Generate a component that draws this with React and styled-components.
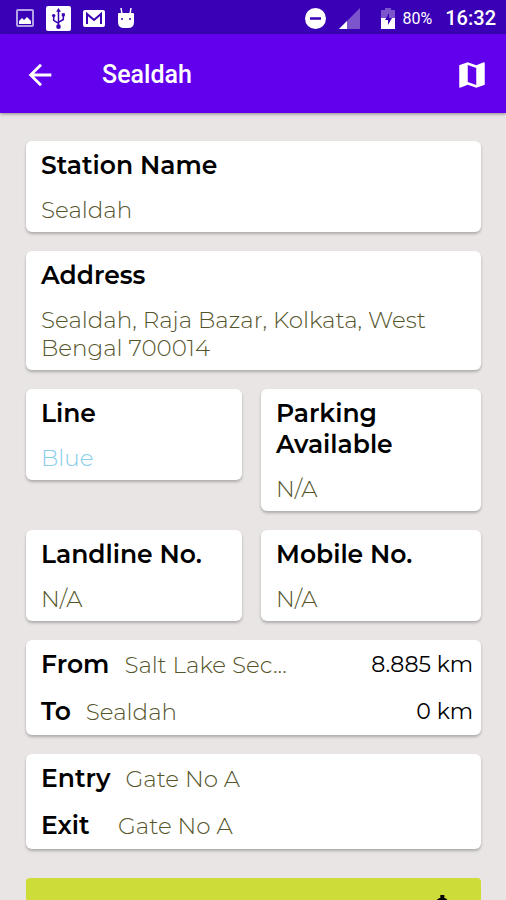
import React from 'react';
import styled, { createGlobalStyle } from 'styled-components';
import { MdArrowBack, MdMap, MdAttachMoney } from 'react-icons/md';

const details = {
    name: 'Sealdah',
    address: 'Sealdah, Raja Bazar, Kolkata, West Bengal 700014',
    line: 'Blue',
    parking: 'N/A',
    landline: 'N/A',
    mobile: 'N/A',
};

const distances = [
    { label: 'From', station: 'Salt Lake Sec...', distance: '8.885 km' },
    { label: 'To', station: 'Sealdah', distance: '0 km' },
];

const gates = [
    { label: 'Entry', gate: 'Gate No A' },
    { label: 'Exit', gate: 'Gate No A' },
];

const InfoCard = ({ title, value, color }) => (
    <Card>
        <CardTitle>{title}</CardTitle>
        <CardValue $color={color}>{value}</CardValue>
    </Card>
);

const StatusIcons = () => (
    <IconGroup>
        <svg width="18" height="18" viewBox="0 0 18 18">
            <rect x="1" y="1" width="16" height="16" rx="1" fill="none" stroke="#b3a2e6" strokeWidth="2" />
            <path d="M3 15V12l3-3 2 2 3-3 4 4v3z" fill="#fff" />
        </svg>
        <svg width="25" height="25" viewBox="0 0 26 26">
            <rect width="26" height="26" rx="2" fill="#fff" />
            <path d="M13 5v17M13 18l-5-3v-5M13 17l5-3V9" fill="none" stroke="#3a00b5" strokeWidth="1.6" />
            <g fill="#3a00b5">
                <path d="M13 2l2.5 4h-5z" />
                <circle cx="13" cy="21.5" r="2.4" />
                <circle cx="8" cy="10" r="1.8" />
                <path d="M16.4 7.5h3.2v3.2h-3.2z" />
            </g>
        </svg>
        <svg width="22" height="18" viewBox="0 0 22 18">
            <rect width="22" height="17" y="1" rx="2" fill="#fff" />
            <path d="M4 15V5l7 6 7-6v10" fill="none" stroke="#3a00b5" strokeWidth="2" />
        </svg>
        <svg width="18" height="20" viewBox="0 0 18 20">
            <path d="M4 0l1 6M14 0l-1 6" stroke="#fff" strokeWidth="1.5" />
            <path d="M2 5h14q1 0 1 1v8q0 6-6 6H7q-6 0-6-6V6q0-1 1-1z" fill="#fff" />
            <circle cx="5" cy="11" r="1" fill="#3a00b5" />
            <circle cx="13" cy="11" r="1" fill="#3a00b5" />
        </svg>
    </IconGroup>
);

const App = () => {
    return (
        <Screen>
            <GlobalStyle />
            <StatusBar>
                <StatusIcons />
                <StatusRight>
                    <svg width="21" height="21" viewBox="0 0 21 21">
                        <circle cx="10.5" cy="10.5" r="10.5" fill="#fff" />
                        <path d="M5 10.5h11" stroke="#3a00b5" strokeWidth="2.5" />
                    </svg>
                    <svg width="21" height="21" viewBox="0 0 21 21">
                        <path d="M21 0v21H0z" fill="#7c55cd" />
                        <path d="M8 13v8H0z" fill="#fff" />
                    </svg>
                    <Battery>
                        <svg width="14" height="21" viewBox="0 0 14 21">
                            <path d="M4 0h6v2h4v8H0V2h4z" fill="#7c55cd" />
                            <path d="M0 10h14v11H0z" fill="#fff" />
                            <path d="M8 5l-4 7h3v5l4-7H8z" fill="#3a00b5" />
                        </svg>
                        <BatteryLevel>80%</BatteryLevel>
                    </Battery>
                    <Clock>16:32</Clock>
                </StatusRight>
            </StatusBar>
            <AppBar>
                <IconButton aria-label="Back"><MdArrowBack size={34} /></IconButton>
                <PageTitle>Sealdah</PageTitle>
                <IconButton aria-label="Map"><MdMap size={34} /></IconButton>
            </AppBar>
            <Content>
                <InfoCard title="Station Name" value={details.name} />
                <InfoCard title="Address" value={details.address} />
                <CardPair>
                    <InfoCard title="Line" value={details.line} color="#87ceeb" />
                    <InfoCard title="Parking Available" value={details.parking} />
                </CardPair>
                <CardPair>
                    <InfoCard title="Landline No." value={details.landline} />
                    <InfoCard title="Mobile No." value={details.mobile} />
                </CardPair>
                <RowCard>
                    {distances.map(item => (
                        <Row key={item.label}>
                            <CardTitle>{item.label}</CardTitle>
                            <CardValue>{item.station}</CardValue>
                            <Distance>{item.distance}</Distance>
                        </Row>
                    ))}
                </RowCard>
                <RowCard>
                    {gates.map(item => (
                        <GateRow key={item.label}>
                            <CardTitle>{item.label}</CardTitle>
                            <CardValue>{item.gate}</CardValue>
                        </GateRow>
                    ))}
                </RowCard>
                <FareButton aria-label="Fare"><MdAttachMoney size={32} /></FareButton>
            </Content>
        </Screen>
    );
};

const GlobalStyle = createGlobalStyle`
    * {
        box-sizing: border-box;
    }

    body {
        margin: 0;
        background: #e8e5e4;
    }
`;

const Screen = styled.div`
    height: 100vh;
    display: flex;
    flex-direction: column;
    font-family: Montserrat, Inter, sans-serif;
    color: #000;
`;

const StatusBar = styled.div`
    flex: none;
    display: flex;
    justify-content: space-between;
    align-items: center;
    height: 34px;
    padding: 2px 10px 0 16px;
    background: #3a00b5;
    color: #fff;
    font-family: Roboto, sans-serif;
`;

const IconGroup = styled.div`
    display: flex;
    align-items: center;
    gap: 12px;
`;

const StatusRight = styled.div`
    display: flex;
    align-items: center;
    gap: 13px;
`;

const Battery = styled.div`
    display: flex;
    align-items: center;
    gap: 8px;
    margin-left: 8px;
`;

const BatteryLevel = styled.span`
    font-size: 16px;
`;

const Clock = styled.span`
    font-size: 20px;
    font-weight: 500;
`;

const AppBar = styled.header`
    flex: none;
    display: flex;
    align-items: center;
    height: 79px;
    padding: 2px 17px 0 23px;
    background: #6200ee;
    box-shadow: 0 1px 3px rgba(0, 0, 0, 0.4);
    color: #fff;
    z-index: 1;
`;

const IconButton = styled.button`
    display: flex;
    padding: 0;
    border: 0;
    background: none;
    color: inherit;
    cursor: pointer;
`;

const PageTitle = styled.h1`
    flex: 1;
    margin: 0 0 0 45px;
    font-family: Roboto, sans-serif;
    font-size: 25px;
    font-weight: 500;
`;

const Content = styled.main`
    flex: 1;
    min-height: 0;
    display: flex;
    flex-direction: column;
    gap: 19px;
    padding: 28px 25px 28px 26px;
    overflow-y: auto;
    scrollbar-width: none;

    > * {
        flex: none;
    }
`;

const Card = styled.section`
    display: flex;
    flex-direction: column;
    gap: 15px;
    padding: 9px 8px 8px 15px;
    border-radius: 6px;
    background: #fff;
    box-shadow: 0 2px 3px rgba(0, 0, 0, 0.25);
`;

const RowCard = styled(Card)`
    gap: 16px;
`;

const CardPair = styled.div`
    display: grid;
    grid-template-columns: 54fr 55fr;
    align-items: start;
    gap: 19px;
`;

const CardTitle = styled.h2`
    margin: 0;
    font-size: 25px;
    font-weight: 600;
    line-height: 31px;
`;

const CardValue = styled.p`
    margin: 0;
    font-size: 23px;
    font-weight: 300;
    line-height: 28px;
    color: ${props => props.$color || '#55552b'};
`;

const Row = styled.div`
    display: flex;
    align-items: center;
    gap: 15px;
`;

const GateRow = styled(Row)`
    ${CardTitle} {
        min-width: 62px;
    }
`;

const Distance = styled.span`
    margin-left: auto;
    font-size: 22px;
    font-weight: 400;
    line-height: 28px;
`;

const FareButton = styled.button`
    display: flex;
    justify-content: flex-end;
    align-items: center;
    height: 58px;
    margin-top: 10px;
    padding: 0 22px;
    border: 0;
    border-radius: 4px;
    background: #cddc39;
    color: #000;
    cursor: pointer;
`;

export default App;
